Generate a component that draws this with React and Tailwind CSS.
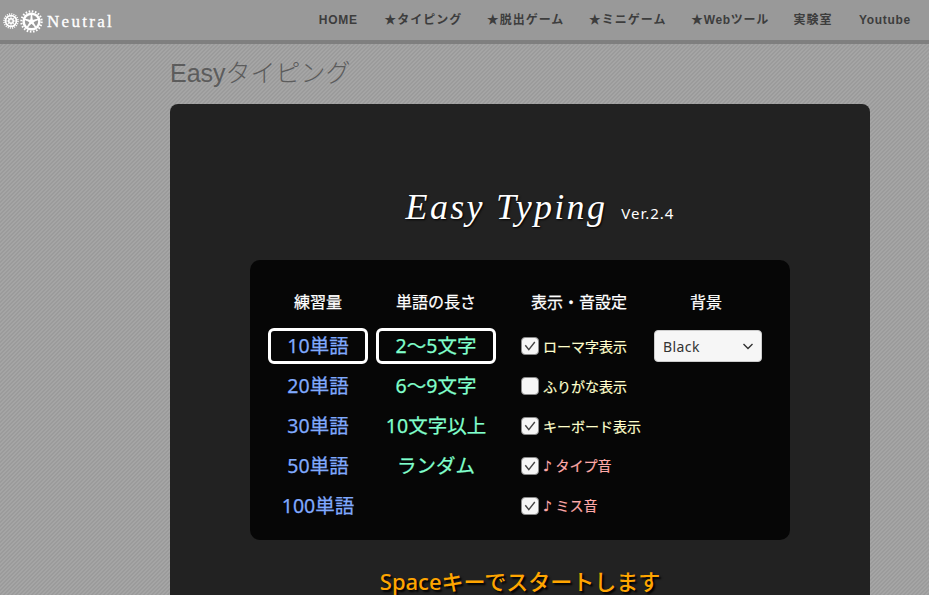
const Gear = ({ size, star }) => (
  <svg width={size} height={size} viewBox="0 0 24 24" className="block shrink-0">
    <circle cx="12" cy="12" r="10.6" fill="none" stroke="#fff" strokeWidth="2.2" strokeDasharray="1.67 1.66" />
    <circle cx="12" cy="12" r="8.2" fill="none" stroke="#fff" strokeWidth="2.6" />
    {star ? (
      <>
        {[0, 72, 144, 216, 288].map((a) => (
          <path key={a} d="M10.7 12 L11.3 4 L12.7 4 L13.3 12 Z" fill="#fff" transform={`rotate(${a} 12 12)`} />
        ))}
        <path d="M12 7.5 L13.3 10.4 L16.4 10.7 L14.1 12.8 L14.8 15.9 L12 14.3 L9.2 15.9 L9.9 12.8 L7.6 10.7 L10.7 10.4 Z" fill="#fff" />
      </>
    ) : (
      <>
        <circle cx="12" cy="12" r="3.6" fill="none" stroke="#fff" strokeWidth="2" />
        {[0, 45, 90, 135].map((a) => (
          <path key={a} d="M11.3 4 H12.7 V20 H11.3 Z" fill="#fff" transform={`rotate(${a} 12 12)`} />
        ))}
        <circle cx="12" cy="12" r="1.6" fill="#999" />
      </>
    )}
  </svg>
);

const navFont = "font-['Liberation_Sans','Noto_Sans_CJK_JP',sans-serif]";

const NavItem = ({ children, tight, extra = "" }) => (
  <a className={`text-[12px] font-bold text-[#3d3d3d] whitespace-nowrap ${tight ? "tracking-[0.7px]" : "tracking-[1px]"} ${extra}`}>
    {children}
  </a>
);

const Note = () => <span className="font-['DejaVu_Sans',sans-serif]">♪</span>;

const Check = ({ checked, children, color }) => (
  <div className="h-10 flex items-center">
    <span className="w-[18px] h-[18px] rounded-[4px] bg-[#f6f6f6] border border-[#8a8a8a] flex items-center justify-center shrink-0">
      {checked && (
        <svg width="16" height="16" viewBox="0 0 16 16" fill="none">
          <path d="M3.3 7.2 L6.8 11.6 L12.8 4" stroke="#444" strokeWidth="1.4" />
        </svg>
      )}
    </span>
    <span className={`ml-[4px] text-[14px] whitespace-nowrap [-webkit-text-stroke:0.2px_currentColor] ${color}`}>{children}</span>
  </div>
);

const Opt = ({ children, active, color, w }) => (
  <div className={`h-10 flex items-center justify-center text-[19.5px] whitespace-nowrap [-webkit-text-stroke:0.25px_currentColor] ${color} ${w}`}>
    {active ? (
      <span className="w-full h-[36px] border-[3px] border-white rounded-[6px] flex items-center justify-center">
        {children}
      </span>
    ) : (
      children
    )}
  </div>
);

const Head = ({ children }) => (
  <div className="h-10 mb-[4px] flex items-center justify-center text-[16px] text-white whitespace-nowrap [-webkit-text-stroke:0.25px_#fff]">
    {children}
  </div>
);

export default function App() {
  return (
    <div className="h-[595px] overflow-hidden bg-[#a0a0a0] bg-[repeating-linear-gradient(135deg,#a5a5a5_0px,#a5a5a5_1.414px,#9b9b9b_1.414px,#9b9b9b_2.828px)]">
      <header className={`h-[44px] bg-[#999999] border-b-4 border-[#7f7f7f] flex items-center justify-between ${navFont}`}>
        <div className="flex items-center pl-[3px] pt-[2px]">
          <Gear size={16} />
          <span className="w-[1px]" />
          <Gear size={23} star />
          <span className="ml-[4px] text-[17px] font-['Liberation_Serif',serif] tracking-[2.3px] text-white leading-none [-webkit-text-stroke:0.3px_#fff]">
            Neutral
          </span>
        </div>
        <nav className="flex items-center gap-[24.5px] pr-[18px]">
          <NavItem tight extra="mr-[2px]">HOME</NavItem>
          <NavItem>★タイピング</NavItem>
          <NavItem>★脱出ゲーム</NavItem>
          <NavItem>★ミニゲーム</NavItem>
          <NavItem tight>★Webツール</NavItem>
          <NavItem>実験室</NavItem>
          <NavItem tight extra="ml-[2px]">Youtube</NavItem>
        </nav>
      </header>

      <main className="w-[700px] ml-[170px]">
        <h1 className={`h-[60px] pt-[9px] text-[25px] leading-[40px] font-light text-[#5c5c5c] ${navFont}`}>
          Easyタイピング
        </h1>
        <section className="h-[600px] bg-[#222222] rounded-[8px] pt-[76px] font-['Noto_Sans','Noto_Sans_CJK_JP',sans-serif]">
          <div className="h-[80px] flex items-baseline justify-center pl-[40px]">
            <span className="font-['Liberation_Serif',serif] italic text-[36px] tracking-[2.3px] text-white [text-shadow:1px_1px_2px_#000]">
              Easy Typing
            </span>
            <span className="ml-[14px] text-[15px] tracking-[1px] text-white">Ver.2.4</span>
          </div>

          <div className="w-[540px] h-[280px] mx-auto bg-[#060606] rounded-[10px] pt-[22px] pl-[18px] flex">
            <div className="w-[100px] flex flex-col">
              <Head>練習量</Head>
              <Opt active color="text-[#80aaff]" w="w-[100px]">10単語</Opt>
              <Opt color="text-[#80aaff]" w="w-[100px]">20単語</Opt>
              <Opt color="text-[#80aaff]" w="w-[100px]">30単語</Opt>
              <Opt color="text-[#80aaff]" w="w-[100px]">50単語</Opt>
              <Opt color="text-[#80aaff]" w="w-[100px]">100単語</Opt>
            </div>
            <div className="w-[120px] ml-[8px] flex flex-col">
              <Head>単語の長さ</Head>
              <Opt active color="text-[#80ffcc]" w="w-[120px]">2〜5文字</Opt>
              <Opt color="text-[#80ffcc]" w="w-[120px]">6〜9文字</Opt>
              <Opt color="text-[#80ffcc]" w="w-[120px]">10文字以上</Opt>
              <Opt color="text-[#80ffcc]" w="w-[120px]">ランダム</Opt>
            </div>
            <div className="w-[133px] ml-[25px] flex flex-col">
              <div className="w-[116px]"><Head>表示・音設定</Head></div>
              <Check checked color="text-[#ffffcc]">ローマ字表示</Check>
              <Check color="text-[#ffffcc]">ふりがな表示</Check>
              <Check checked color="text-[#ffffcc]">キーボード表示</Check>
              <Check checked color="text-[#ffaaaa]"><Note /> タイプ音</Check>
              <Check checked color="text-[#ffaaaa]"><Note /> ミス音</Check>
            </div>
            <div className="w-[108px] flex flex-col">
              <div className="w-[104px]"><Head>背景</Head></div>
              <div className="h-10 flex items-center">
                <div className="w-[108px] h-[32px] bg-[#f6f6f6] rounded-[4px] border border-[#cccccc] flex items-center justify-between pl-[8px] pr-[7px] text-[14px] tracking-[0.4px] text-[#333333]">
                  <span>Black</span>
                  <svg width="12" height="12" viewBox="0 0 12 12" fill="none">
                    <path d="M1.5 4 L6 8.5 L10.5 4" stroke="#333" strokeWidth="1.4" />
                  </svg>
                </div>
              </div>
            </div>
          </div>

          <div className="mt-[25px] text-center text-[22px] font-medium text-[#ffa500] [text-shadow:2px_2px_2px_#000]">
            Spaceキーでスタートします
          </div>
        </section>
      </main>
    </div>
  );
}
